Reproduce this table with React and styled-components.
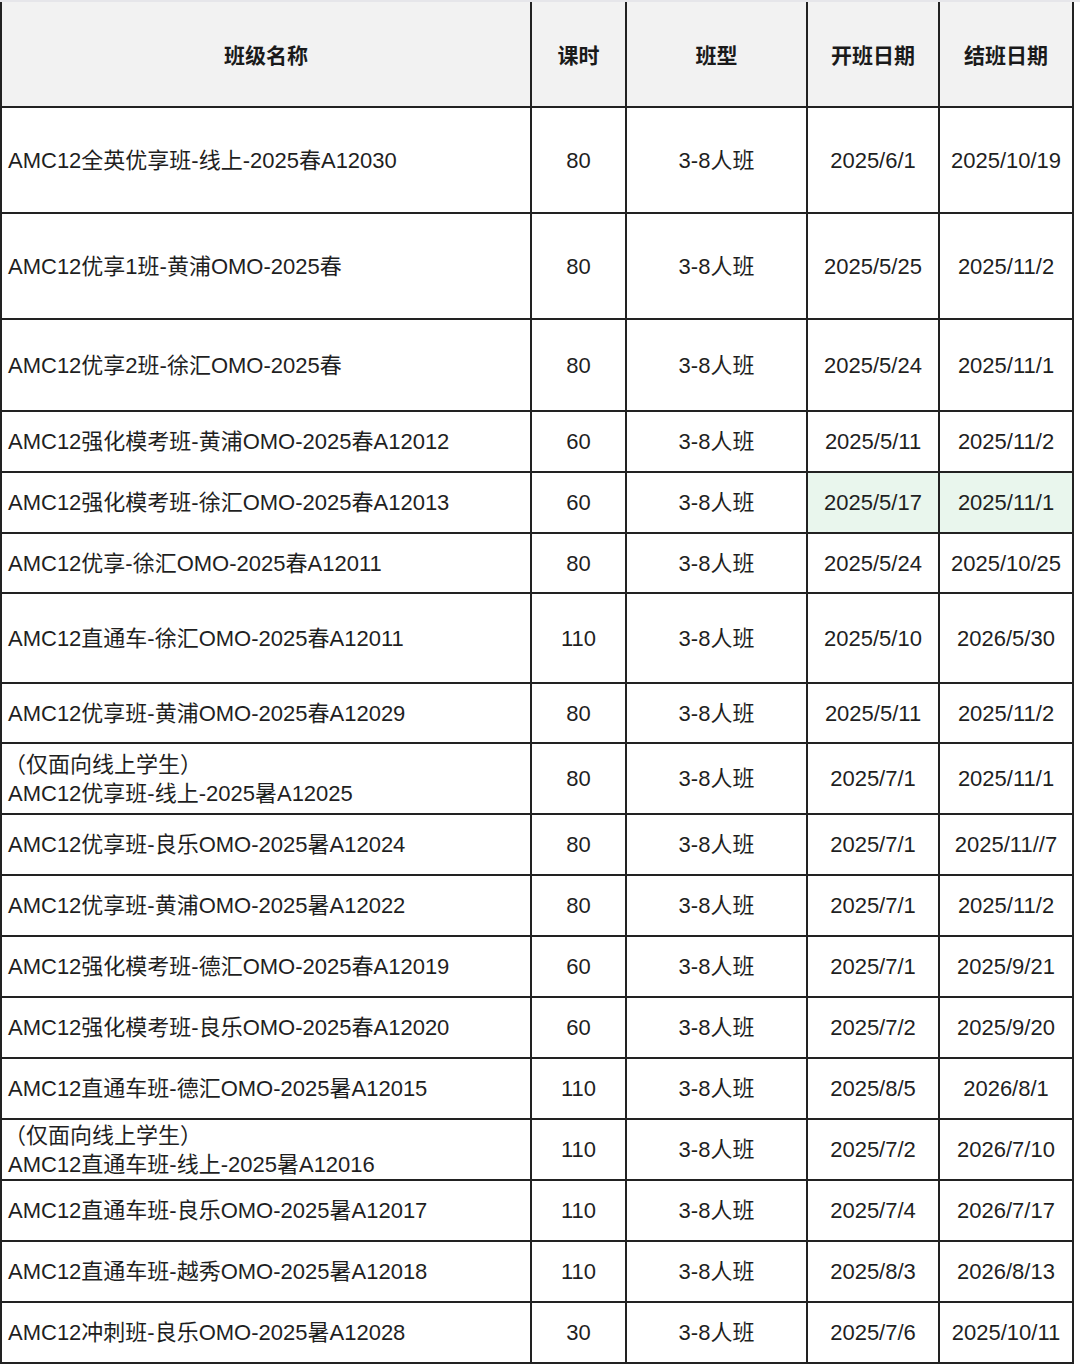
import React from 'react';
import styled, { createGlobalStyle } from 'styled-components';

const GlobalStyle = createGlobalStyle`
  html, body {
    margin: 0;
    padding: 0;
    background: #fff;
  }
  body {
    font-family: "Liberation Sans", "Noto Sans CJK SC", sans-serif;
    color: #1f1f1f;
  }
`;

const Page = styled.div`
  width: 1080px;
  border-top: 2px solid #e6e6ea;
`;

const Table = styled.table`
  border-collapse: collapse;
  table-layout: fixed;
  width: 1072px;
  font-size: 22px;
`;

const HeadRow = styled.tr`
  height: 105px;
  background: #f2f2f2;
`;

const Th = styled.th`
  border: 2px solid #222;
  border-top: none;
  font-weight: 700;
  font-size: 21px;
  color: #1a1a1a;
  text-align: center;
  vertical-align: middle;
  padding: 0;
`;

const Row = styled.tr`
  height: ${p => p.$h}px;
`;

const Td = styled.td`
  border: 2px solid #222;
  padding: 0 ${p => (p.$left ? '6px' : '0')};
  text-align: ${p => (p.$left ? 'left' : 'center')};
  vertical-align: middle;
  line-height: 29px;
  background: ${p => (p.$mark ? '#e9f6ed' : 'transparent')};
  white-space: nowrap;
  overflow: hidden;
`;

const Line = styled.div`
  margin-left: ${p => (p.$paren ? '-4px' : '0')};
`;

const columns = [
  { label: '班级名称', width: 530 },
  { label: '课时', width: 95 },
  { label: '班型', width: 181 },
  { label: '开班日期', width: 132 },
  { label: '结班日期', width: 134 },
];

const rows = [
  { h: 106, name: ['AMC12全英优享班-线上-2025春A12030'], hours: 80, start: '2025/6/1', end: '2025/10/19' },
  { h: 106, name: ['AMC12优享1班-黄浦OMO-2025春'], hours: 80, start: '2025/5/25', end: '2025/11/2' },
  { h: 92, name: ['AMC12优享2班-徐汇OMO-2025春'], hours: 80, start: '2025/5/24', end: '2025/11/1' },
  { h: 61, name: ['AMC12强化模考班-黄浦OMO-2025春A12012'], hours: 60, start: '2025/5/11', end: '2025/11/2' },
  { h: 61, name: ['AMC12强化模考班-徐汇OMO-2025春A12013'], hours: 60, start: '2025/5/17', end: '2025/11/1', mark: true },
  { h: 60, name: ['AMC12优享-徐汇OMO-2025春A12011'], hours: 80, start: '2025/5/24', end: '2025/10/25' },
  { h: 90, name: ['AMC12直通车-徐汇OMO-2025春A12011'], hours: 110, start: '2025/5/10', end: '2026/5/30' },
  { h: 60, name: ['AMC12优享班-黄浦OMO-2025春A12029'], hours: 80, start: '2025/5/11', end: '2025/11/2' },
  { h: 71, name: ['（仅面向线上学生）', 'AMC12优享班-线上-2025暑A12025'], hours: 80, start: '2025/7/1', end: '2025/11/1' },
  { h: 61, name: ['AMC12优享班-良乐OMO-2025暑A12024'], hours: 80, start: '2025/7/1', end: '2025/11//7' },
  { h: 61, name: ['AMC12优享班-黄浦OMO-2025暑A12022'], hours: 80, start: '2025/7/1', end: '2025/11/2' },
  { h: 61, name: ['AMC12强化模考班-德汇OMO-2025春A12019'], hours: 60, start: '2025/7/1', end: '2025/9/21' },
  { h: 61, name: ['AMC12强化模考班-良乐OMO-2025春A12020'], hours: 60, start: '2025/7/2', end: '2025/9/20' },
  { h: 61, name: ['AMC12直通车班-德汇OMO-2025暑A12015'], hours: 110, start: '2025/8/5', end: '2026/8/1' },
  { h: 61, name: ['（仅面向线上学生）', 'AMC12直通车班-线上-2025暑A12016'], hours: 110, start: '2025/7/2', end: '2026/7/10' },
  { h: 61, name: ['AMC12直通车班-良乐OMO-2025暑A12017'], hours: 110, start: '2025/7/4', end: '2026/7/17' },
  { h: 61, name: ['AMC12直通车班-越秀OMO-2025暑A12018'], hours: 110, start: '2025/8/3', end: '2026/8/13' },
  { h: 61, name: ['AMC12冲刺班-良乐OMO-2025暑A12028'], hours: 30, start: '2025/7/6', end: '2025/10/11' },
];

export default function App() {
  return (
    <Page>
      <GlobalStyle />
      <Table>
        <colgroup>
          {columns.map(c => (
            <col key={c.label} style={{ width: c.width }} />
          ))}
        </colgroup>
        <thead>
          <HeadRow>
            {columns.map(c => (
              <Th key={c.label}>{c.label}</Th>
            ))}
          </HeadRow>
        </thead>
        <tbody>
          {rows.map((r, i) => (
            <Row key={i} $h={r.h}>
              <Td $left>
                {r.name.map((line, j) => (
                  <Line key={j} $paren={line.startsWith('（')}>{line}</Line>
                ))}
              </Td>
              <Td>{r.hours}</Td>
              <Td>3-8人班</Td>
              <Td $mark={r.mark}>{r.start}</Td>
              <Td $mark={r.mark}>{r.end}</Td>
            </Row>
          ))}
        </tbody>
      </Table>
    </Page>
  );
}
